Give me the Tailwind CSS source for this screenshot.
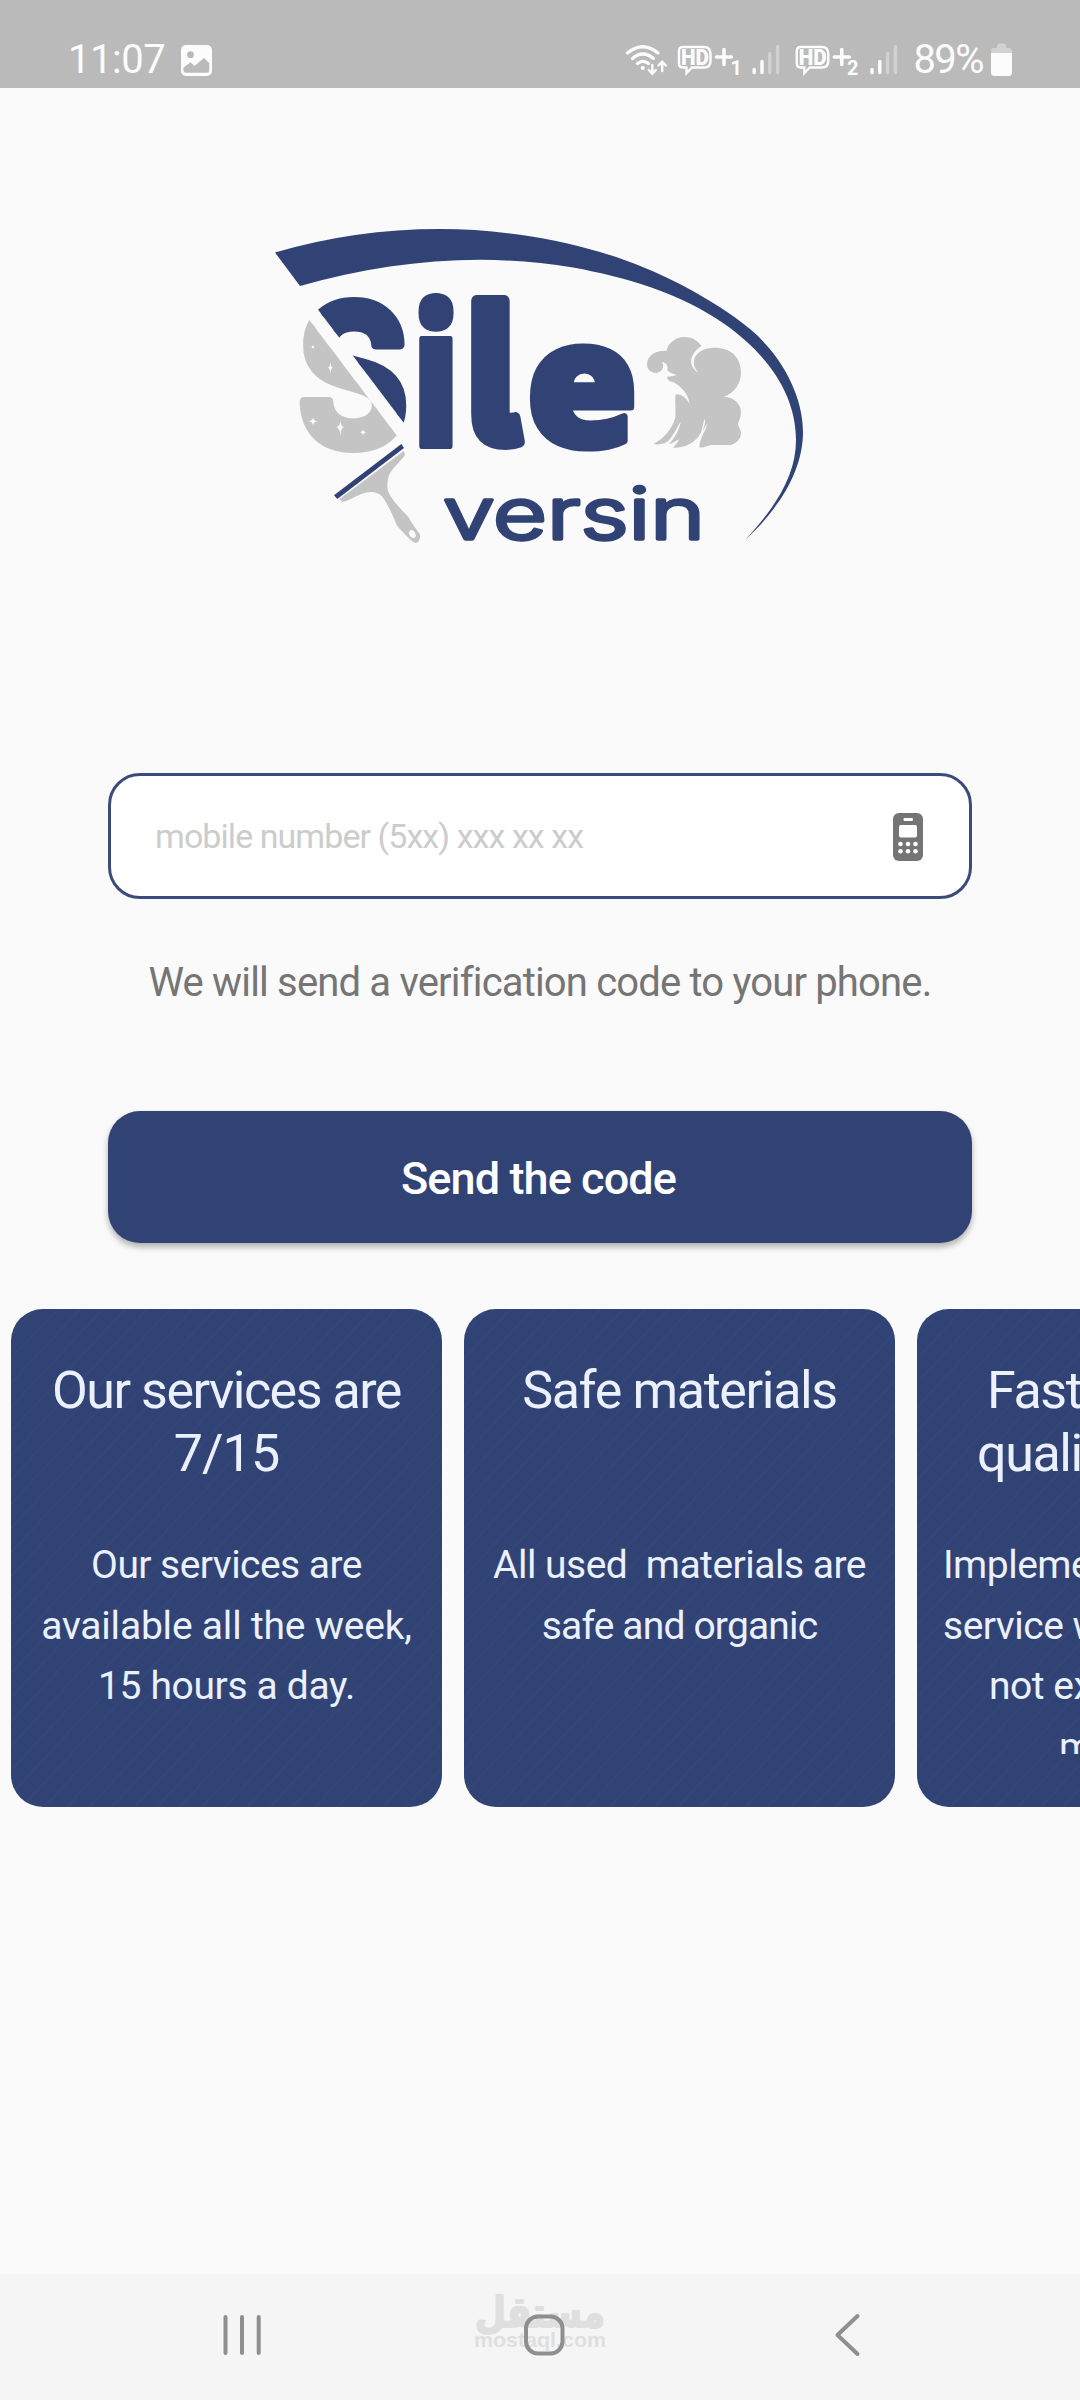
<!DOCTYPE html>
<html lang="en">
<head>
    <meta charset="UTF-8">
    <meta name="viewport" content="width=device-width, initial-scale=1.0">
    <title>Sile versin - Login</title>
    <script src="https://cdn.jsdelivr.net/npm/@tailwindcss/browser@4"></script>
</head>
<body class="bg-[#fafafa] font-['Roboto',sans-serif] w-[1080px] h-[2400px] flex flex-col overflow-hidden">

    <!-- Status bar -->
    <header class="h-[88px] shrink-0 bg-[#bababa] text-[#fcfcfc] flex justify-between pl-[68px] pr-[66px]">
        <div class="flex items-start pt-[36px]">
            <span class="text-[40px] leading-[47px] tracking-[-0.5px]">11:07</span>
            <svg class="mt-[9px] ml-[16px] w-[31px] h-[31px]" viewBox="0 0 31 31">
                <rect width="31" height="31" rx="5" fill="#fcfcfc"/>
                <circle cx="9.5" cy="9.7" r="3.4" fill="#bababa"/>
                <path d="M2.5 22.5L9.5 17.2L13.5 21L23 13L28.2 18V26Q28.2 27.8 26 27.8H5Q2.5 27.8 2.5 26Z" fill="#bababa"/>
            </svg>
        </div>
        <svg class="w-[390px] h-[88px]" viewBox="624 0 390 88" fill="none" stroke="#fcfcfc" stroke-linecap="round">
            <!-- wifi -->
            <path d="M627.5 53Q642.7 40.5 658 53M632.5 58.5Q642.7 49.5 653.5 58.5M637.5 63.5Q642.7 59.2 648.5 63.5" stroke-width="3.3"/>
            <circle cx="642.7" cy="68" r="2.1" fill="#fcfcfc" stroke="none"/>
            <path d="M652.3 65V73.5M648.8 70L652.3 73.7L655.8 70M662.2 71V62M658.5 65.5L662.2 61.7L665.9 65.5" stroke-width="2.4"/>
            <!-- HD+ -->
            <g id="hd">
                <path d="M683 47H704Q710.5 47 710.5 54V61Q710.5 67.5 704 67.5H692L686.5 73V67.5H683Q679 67.5 679 63.5V51Q679 47 683 47Z" stroke-width="2.4"/>
                <path d="M716.5 57H731.5M724 49.5V64.5" stroke-width="3.6"/>
            </g>
            <g font-family="Roboto" font-weight="900" fill="#fcfcfc" stroke="none">
                <text x="681" y="65" font-size="22" textLength="28" lengthAdjust="spacingAndGlyphs">HD</text>
                <text x="798.8" y="65" font-size="22" textLength="28" lengthAdjust="spacingAndGlyphs">HD</text>
                <text x="730.5" y="74.5" font-size="20" font-weight="700">1</text>
                <text x="847" y="74.5" font-size="20" font-weight="700">2</text>
            </g>
            <g id="bars" stroke-width="3.5">
                <path d="M754.2 69.5V72.5M762 61.5V72.5"/>
                <path d="M769.8 53.5V72.5M777.6 46.5V72.5" opacity=".35"/>
            </g>
            <use href="#hd" x="117.8"/>
            <use href="#bars" x="117.8"/>
            <text x="913.5" y="73" font-family="Roboto" font-size="40" fill="#fcfcfc" stroke="none" textLength="71">89%</text>
            <!-- battery -->
            <path d="M991 53V51Q991 48 994 48H997V46Q997 43.500 999 43.500H1004Q1006 43.500 1006 46V48H1009Q1012 48 1012 51V53Z" fill="#d2d2d2" stroke="none"/>
            <path d="M991 53H1012V72.500Q1012 76 1008.500 76H994.500Q991 76 991 72.500Z" fill="#fcfcfc" stroke="none"/>
        </svg>
    </header>

    <main class="flex-1 flex flex-col">
        <!-- Logo -->
        <svg class="mt-[132px] ml-[270px] w-[540px] h-[330px] shrink-0" viewBox="270 220 540 330">
            <defs>
                <clipPath id="s-clean"><path d="M288 260H420V444.200L318.300 310Z"/></clipPath>
                <clipPath id="s-foam"><path d="M290 294.400L413 457V470H290Z"/></clipPath>
            </defs>
            <path fill="#314375" d="M275 252.500Q355 229 440 229C493 229 550 237 600 252C652 267 711 297 750 329C779 353 803 393 803 432C803 470 780 508 745 540C775 508 796 476 796 440C796 392 765 352 723 323C680 293 625 277 573 267.500C480 252 390 261 300 286Z"/>
            <g font-family="Inter" font-size="195" stroke-linejoin="round" style="font-feature-settings:'cv05'">
                <g font-weight="700" stroke-width="10">
                    <text clip-path="url(#s-clean)" fill="#314375" stroke="#314375"><tspan x="297" y="446" textLength="112" lengthAdjust="spacingAndGlyphs">S</tspan></text>
                    <text clip-path="url(#s-foam)" fill="#c4c4c4" stroke="#c4c4c4"><tspan x="297" y="446" textLength="112" lengthAdjust="spacingAndGlyphs">S</tspan></text>
                </g>
                <g fill="#314375" stroke="#314375">
                    <text transform="translate(411.500 445.500) scale(.77 .99)" font-family="Noto Sans" font-weight="900" stroke-width="6">i</text>
                    <text transform="translate(467 443) scale(.85 1)" font-weight="800" stroke-width="12">l</text>
                    <text transform="translate(526 446) scale(.93 .9)" font-family="Noto Sans" font-weight="900" stroke-width="8">e</text>
                </g>
            </g>
            <text x="443" y="538.500" font-family="Inter" font-size="71" font-weight="300" fill="#314375" stroke="#314375" stroke-width="3.500" stroke-linejoin="round" textLength="262" lengthAdjust="spacingAndGlyphs">versin</text>
            <!-- sparkles -->
            <g fill="#fafafa" transform="translate(260 210) scale(.3333)">
                <circle cx="159" cy="411" r="4"/>
                <path d="M211 455Q212 472 219 473Q212 474 211 492Q210 474 204 473Q210 472 211 455Z"/>
                <path d="M143 634Q157 633 159 623Q161 633 175 634Q161 635 159 645Q157 635 143 634Z"/>
                <path d="M241 630Q242 650 252 652Q242 654 241 677Q240 654 229 652Q240 650 241 630Z"/>
                <path d="M299 667Q308 666 309 658Q310 666 320 667Q310 668 309 677Q308 668 299 667Z"/>
            </g>
            <!-- squeegee -->
            <g transform="translate(260 210) scale(.3333)">
                <path d="M222 856L424 702L432 714L232 867Z" fill="#314375"/>
                <path fill="#c4c4c4" fill-rule="evenodd" d="M238 868L430 724Q436 726 434 738C410 765 384 785 383 815Q380 838 386 848C400 875 430 905 446 922C456 942 470 960 478 970Q484 985 474 996Q464 1002 455 992C440 978 425 965 410 945C400 920 385 885 368 862C355 846 335 844 316 848C290 855 270 870 255 874Q245 878 238 868ZM448 964Q444 972 452 980Q462 988 467 980Q470 974 462 964Q454 956 448 964Z"/>
            </g>
            <!-- foam cloud -->
            <path transform="translate(540 210) scale(.3333)" fill="#c4c4c4" d="M484 408C470 385 440 375 412 385C392 395 382 408 380 423C350 420 322 436 321 462C320 482 340 492 352 488C368 484 374 470 366 456C378 458 386 468 382 480C388 488 398 492 408 494C402 500 392 498 382 500C380 508 388 515 400 516C425 530 445 552 449 582C440 565 425 552 407 553C404 575 408 590 406 622C400 650 375 685 340 702C360 706 378 700 388 690C404 670 412 650 422 636C418 660 404 684 387 702C396 702 406 694 416 688C414 698 406 706 399 713C440 716 478 690 486 658C490 645 490 632 495 628C496 642 492 650 488 664Q496 650 502 640C500 660 480 680 478 712C490 716 500 706 515 705L572 705C590 700 604 685 603 668C603 655 592 650 595 638C602 625 604 610 602 598C598 575 575 560 550 560C582 552 603 520 603 488C603 440 570 413 527 413C500 413 478 420 465 440C458 458 462 475 476 488C455 478 448 455 458 436C465 422 475 414 484 408Z"/>
        </svg>

        <!-- Phone form -->
        <form class="mt-[223px] px-[108px] flex flex-col">
            <div class="h-[126px] bg-white border-[3px] border-[#3b4b7b] rounded-[32px] flex items-center justify-between pl-[44px] pr-[46px]">
                <input class="w-[600px] text-[34px] tracking-[-0.94px] placeholder:text-[#cccccc]" type="tel" placeholder="mobile number (5xx) xxx xx xx">
                <svg class="mt-[2px] w-[30px] h-[48px]" viewBox="0 0 30 48">
                    <rect width="30" height="48" rx="6" fill="#757575"/>
                    <g fill="#fff">
                        <rect x="10.500" y="5" width="9.500" height="3" rx="1"/>
                        <rect x="6" y="12" width="18" height="12.500" rx="2"/>
                        <circle cx="7.500" cy="31" r="2.300"/><circle cx="15" cy="31" r="2.300"/><circle cx="22.500" cy="31" r="2.300"/>
                        <circle cx="7.500" cy="38.300" r="2.300"/><circle cx="15" cy="38.300" r="2.300"/><circle cx="22.500" cy="38.300" r="2.300"/>
                    </g>
                </svg>
            </div>
            <p class="mt-[54px] text-[40px] leading-[60px] tracking-[-0.83px] text-[#757575] text-center whitespace-nowrap">We will send a verification code to your phone.</p>
            <button type="button" class="mt-[98px] h-[132px] pt-[3px] pr-[3px] rounded-[32px] bg-[#314375] text-white text-[45px] font-medium tracking-[-0.9px] shadow-[0_4px_6px_rgba(0,0,0,0.3)]">Send the code</button>
        </form>

        <!-- Service cards -->
        <section class="mt-[66px] ml-[11px] flex gap-[22px] w-max text-[#ebf0fd] text-center">
            <article class="w-[431px] h-[497.500px] pt-[51px] rounded-[32px] bg-[#314375] bg-[repeating-linear-gradient(133deg,#344678_0_1.500px,#314375_2.500px_16.500px)]">
                <h2 class="h-[125px] text-[52px] leading-[62.500px] tracking-[-1.5px]">Our services are<br><span class="tracking-[-0.9px]">7/15</span></h2>
                <p class="mt-[50px] h-[219px] overflow-hidden text-[39px] leading-[60.500px] tracking-[-0.35px]"><span class="tracking-[-0.55px]">Our services are</span><br><span class="tracking-[-0.2px]">available all the week,</span><br>15 hours a day.</p>
            </article>
            <article class="w-[431px] h-[497.500px] pt-[51px] rounded-[32px] bg-[#314375] bg-[repeating-linear-gradient(133deg,#344678_0_1.500px,#314375_2.500px_16.500px)]">
                <h2 class="h-[125px] text-[52px] leading-[62.500px] tracking-[-1.35px]">Safe materials</h2>
                <p class="mt-[50px] h-[219px] overflow-hidden text-[39px] leading-[60.500px] tracking-[-0.5px]">All used&nbsp; materials are<br><span class="tracking-[-0.83px]">safe and organic</span></p>
            </article>
            <article class="w-[431px] h-[497.500px] pt-[51px] rounded-[32px] bg-[#314375] bg-[repeating-linear-gradient(133deg,#344678_0_1.500px,#314375_2.500px_16.500px)] text-left whitespace-nowrap">
                <h2 class="h-[125px] text-[52px] leading-[62.500px] tracking-[-1.4px]">
                    <span class="block pl-[70px]">Fast and high</span>
                    <span class="block pl-[60px]">quality work</span>
                </h2>
                <div class="mt-[50px] h-[219px] overflow-hidden text-[39px] leading-[60.500px] tracking-[-0.5px]">
                    <p class="pl-[26px]">Implementing the</p>
                    <p class="pl-[26px]">service within a time</p>
                    <p class="pl-[72px]">not exceeding 60</p>
                    <p class="pl-[142px]">minutes.</p>
                </div>
            </article>
        </section>
    </main>

    <!-- Navigation bar -->
    <nav class="h-[126px] shrink-0 bg-[#f5f5f5]">
        <svg class="w-[1080px] h-[126px]" viewBox="0 2274 1080 126" fill="none" stroke="#8f8f8f" stroke-width="4" stroke-linecap="round" stroke-linejoin="round">
            <g fill="#dfdfdf" stroke="none" font-weight="700">
                <text x="540" y="2327" text-anchor="middle" font-family="DejaVu Sans" font-size="42" stroke="#dfdfdf" stroke-width="2" textLength="130" lengthAdjust="spacingAndGlyphs">مستقل</text>
                <text x="474" y="2347" font-family="Liberation Sans" font-size="21" textLength="132" lengthAdjust="spacingAndGlyphs">mostaql.com</text>
            </g>
            <path d="M225.500 2317V2353M242 2317V2353M258.700 2317V2353"/>
            <rect x="526" y="2316.500" width="36.500" height="37" rx="12"/>
            <path d="M857.500 2316L837.500 2335L857.500 2354"/>
        </svg>
    </nav>

</body>
</html>
